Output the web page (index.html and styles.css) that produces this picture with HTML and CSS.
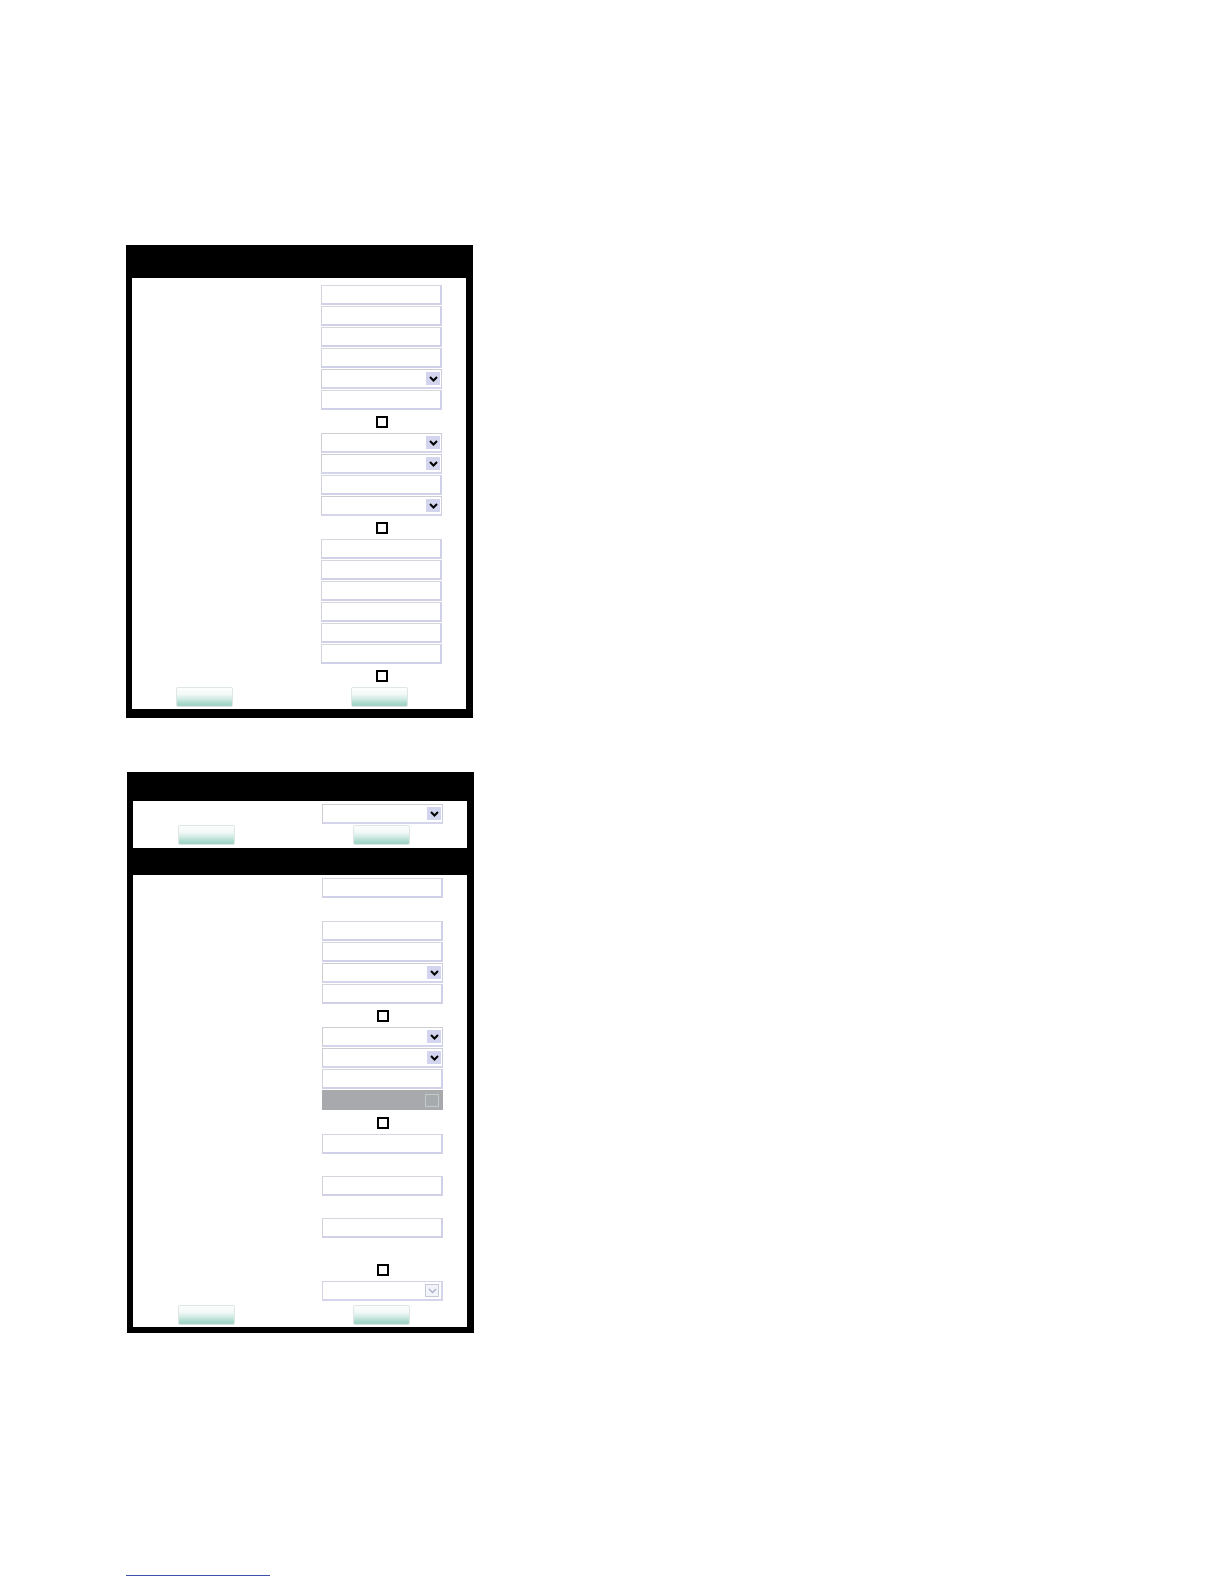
FILE: index.html
```html
<!DOCTYPE html>
<html>
<head>
<meta charset="utf-8">
<title>Form</title>
<link rel="stylesheet" href="styles.css">
</head>
<body>
<div class="page">
  <div class="panel panel-one">
    <div class="bar bar-33"></div>
    <div class="sheet sheet-one">
      <div class="row"><div class="field"></div></div>
      <div class="row"><div class="field"></div></div>
      <div class="row"><div class="field"></div></div>
      <div class="row"><div class="field"></div></div>
      <div class="row"><div class="field select"><span class="arrow"><svg width="9" height="6" viewBox="0 0 9 6"><path d="M1 1 L4.5 4.5 L8 1" fill="none" stroke="#000" stroke-width="2"/></svg></span></div></div>
      <div class="row"><div class="field"></div></div>
      <div class="row row-check"><span class="check"></span></div>
      <div class="row"><div class="field select"><span class="arrow"><svg width="9" height="6" viewBox="0 0 9 6"><path d="M1 1 L4.5 4.5 L8 1" fill="none" stroke="#000" stroke-width="2"/></svg></span></div></div>
      <div class="row"><div class="field select"><span class="arrow"><svg width="9" height="6" viewBox="0 0 9 6"><path d="M1 1 L4.5 4.5 L8 1" fill="none" stroke="#000" stroke-width="2"/></svg></span></div></div>
      <div class="row"><div class="field"></div></div>
      <div class="row"><div class="field select"><span class="arrow"><svg width="9" height="6" viewBox="0 0 9 6"><path d="M1 1 L4.5 4.5 L8 1" fill="none" stroke="#000" stroke-width="2"/></svg></span></div></div>
      <div class="row row-check"><span class="check"></span></div>
      <div class="row"><div class="field"></div></div>
      <div class="row"><div class="field"></div></div>
      <div class="row"><div class="field"></div></div>
      <div class="row"><div class="field"></div></div>
      <div class="row"><div class="field"></div></div>
      <div class="row"><div class="field"></div></div>
      <div class="row row-check"><span class="check"></span></div>
      <div class="row row-buttons"><span class="btn"></span><span class="btn btn-right"></span></div>
    </div>
  </div>

  <div class="panel panel-two">
    <div class="bar bar-29"></div>
    <div class="sheet sheet-top">
      <div class="row"><div class="field select"><span class="arrow"><svg width="9" height="6" viewBox="0 0 9 6"><path d="M1 1 L4.5 4.5 L8 1" fill="none" stroke="#000" stroke-width="2"/></svg></span></div></div>
      <div class="row row-buttons"><span class="btn"></span><span class="btn btn-right"></span></div>
    </div>
    <div class="bar bar-27"></div>
    <div class="sheet sheet-two">
      <div class="row"><div class="field"></div></div>
      <div class="row gap-22"></div>
      <div class="row"><div class="field"></div></div>
      <div class="row"><div class="field"></div></div>
      <div class="row"><div class="field select"><span class="arrow"><svg width="9" height="6" viewBox="0 0 9 6"><path d="M1 1 L4.5 4.5 L8 1" fill="none" stroke="#000" stroke-width="2"/></svg></span></div></div>
      <div class="row"><div class="field"></div></div>
      <div class="row row-check"><span class="check"></span></div>
      <div class="row"><div class="field select"><span class="arrow"><svg width="9" height="6" viewBox="0 0 9 6"><path d="M1 1 L4.5 4.5 L8 1" fill="none" stroke="#000" stroke-width="2"/></svg></span></div></div>
      <div class="row"><div class="field select"><span class="arrow"><svg width="9" height="6" viewBox="0 0 9 6"><path d="M1 1 L4.5 4.5 L8 1" fill="none" stroke="#000" stroke-width="2"/></svg></span></div></div>
      <div class="row"><div class="field"></div></div>
      <div class="row"><div class="field disabled"><span class="mini-box"></span></div></div>
      <div class="row row-check row-check-mid"><span class="check"></span></div>
      <div class="row"><div class="field"></div></div>
      <div class="row gap-21"></div>
      <div class="row"><div class="field"></div></div>
      <div class="row gap-21"></div>
      <div class="row"><div class="field"></div></div>
      <div class="row gap-20"></div>
      <div class="row row-check"><span class="check"></span></div>
      <div class="row row-select-last"><div class="field select select-off"><span class="arrow arrow-off"><svg width="9" height="6" viewBox="0 0 9 6"><path d="M1 1 L4.5 4.5 L8 1" fill="none" stroke="#a9b0c8" stroke-width="1.4"/></svg></span></div></div>
      <div class="row row-buttons"><span class="btn"></span><span class="btn btn-right"></span></div>
    </div>
  </div>

  <div class="footnote-rule"></div>
</div>
</body>
</html>
```

FILE: styles.css
```css
* {
  box-sizing: border-box;
}

html, body {
  margin: 0;
  padding: 0;
  background: #ffffff;
  font-family: "Liberation Sans", Arial, sans-serif;
}

.page {
  width: 1224px;
  height: 1584px;
  padding-top: 245px;
}

.panel {
  width: 347px;
  background: #000000;
}

.panel-one {
  margin-left: 126px;
  padding: 0 7px 9px 6px;
}

.panel-two {
  margin-left: 127px;
  margin-top: 54px;
  padding: 0 7px 6px 6px;
}

.bar-33 { height: 33px; }
.bar-29 { height: 29px; }
.bar-27 { height: 27px; }

.sheet {
  background: #ffffff;
}

.sheet-one {
  padding-top: 7px;
}

.sheet-top {
  padding-top: 3px;
  padding-bottom: 1px;
}

.sheet-two {
  padding-top: 3px;
}

.row {
  display: flex;
  align-items: flex-start;
  height: 21px;
  padding-left: 189px;
}

.gap-22 { height: 22px; }
.gap-21 { height: 21px; }
.gap-20 { height: 20px; }

.row-check {
  height: 22px;
  align-items: center;
  padding-left: 244px;
}

.row-check-mid {
  height: 23px;
}

.row-select-last {
  height: 24px;
}

.row-buttons {
  height: 22px;
  padding-left: 44px;
}

.sheet-top .row-buttons,
.sheet-two .row-buttons {
  padding-left: 45px;
}

.field {
  width: 121px;
  height: 20px;
  background: #ffffff;
  border-top: 1px solid #d6d6de;
  border-left: 1px solid #d2d2da;
  border-right: 2px solid #d0d0e8;
  border-bottom: 2px solid #d0d0e8;
}

.select {
  display: flex;
  align-items: center;
  justify-content: flex-end;
  padding-right: 1px;
  border-top: 1px solid #cdcdd3;
  border-left: 1px solid #cdcdd3;
  border-right: 1px solid #cdcde2;
  border-bottom: 2px solid #d4d4ea;
}

.arrow {
  width: 14px;
  height: 13px;
  background: #d3d5ee;
  display: flex;
  align-items: center;
  justify-content: center;
}

.select-off {
  border-top: 1px solid #d4d4e4;
  border-left: 1px solid #d4d4e4;
  border-right: 2px solid #d4d4ea;
  border-bottom: 2px solid #d4d4ea;
  padding-right: 2px;
}

.arrow-off {
  width: 14px;
  height: 13px;
  background: #f3f4f9;
  border: 1px solid #c6cad8;
}

.disabled {
  background: #a7a9ad;
  border: none;
  display: flex;
  align-items: center;
  justify-content: flex-end;
  padding-right: 4px;
}

.mini-box {
  width: 14px;
  height: 13px;
  border: 1px solid #c4caca;
  background: #a6acad;
}

.check {
  display: block;
  width: 12px;
  height: 12px;
  border: 2px solid #000000;
  background: #ffffff;
}

.btn {
  display: block;
  width: 57px;
  height: 20px;
  border: 1px solid #dfe7e5;
  border-radius: 2px;
  background: linear-gradient(#fcfefd 0%, #f2f9f7 35%, #d2ebe4 60%, #aad9cc 85%, #9ed2c4 100%);
}

.btn-right {
  margin-left: 118px;
}

.footnote-rule {
  margin-top: 242px;
  margin-left: 126px;
  width: 144px;
  height: 1px;
  background: #3d4fa8;
}
```
